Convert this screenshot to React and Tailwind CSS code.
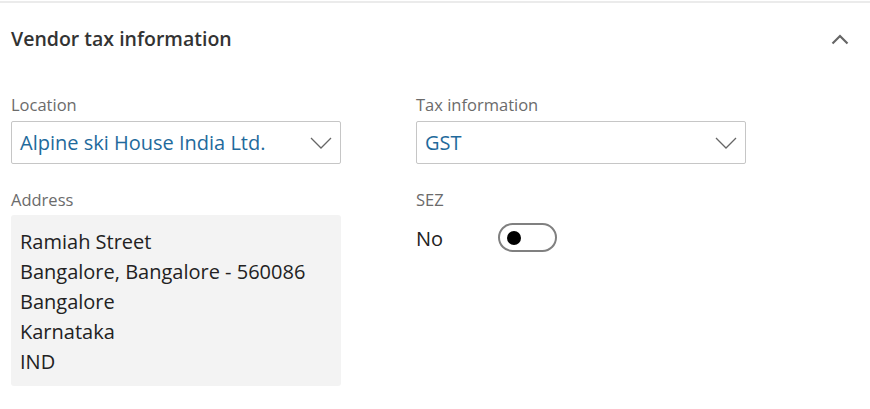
function ChevronDown() {
  return (
    <svg width="22" height="12" viewBox="0 0 22 12" fill="none" className="shrink-0">
      <path d="M1 1 L11 11 L21 1" stroke="#666666" strokeWidth="1.3" />
    </svg>
  );
}

function ChevronUp() {
  return (
    <svg width="18" height="11" viewBox="0 0 18 11" fill="none">
      <path d="M1.5 9.5 L9 2 L16.5 9.5" stroke="#666666" strokeWidth="2.2" />
    </svg>
  );
}

function Label({ children }) {
  return <p className="text-[16.5px] leading-5 text-[#6b6b6b]">{children}</p>;
}

function Select({ value }) {
  return (
    <div className="mt-[6px] flex h-[43px] w-[330px] items-center justify-between rounded-[2px] border border-[#c6c6c6] pl-[8px] pr-[8px]">
      <span className="text-[20px] text-[#1f6a9c]">{value}</span>
      <ChevronDown />
    </div>
  );
}

export default function App() {
  const address = ["Ramiah Street", "Bangalore, Bangalore - 560086", "Bangalore", "Karnataka", "IND"];

  return (
    <div
      className="h-[409px] w-[870px] bg-white"
      style={{ fontFamily: '"Segoe UI", "Open Sans", "Noto Sans", sans-serif' }}
    >
      <div className="mt-px h-[2px] w-full bg-[#ebebeb]" />

      <div className="flex h-[72px] items-center justify-between pl-[11px] pr-[21px]">
        <h2 className="text-[19.5px] font-semibold text-[#333333]">Vendor tax information</h2>
        <ChevronUp />
      </div>

      <div className="flex gap-[75px] pl-[11px] pt-[20px]">
        <div className="w-[330px]">
          <Label>Location</Label>
          <Select value="Alpine ski House India Ltd." />

          <div className="mt-[26px]">
            <Label>Address</Label>
            <div className="mt-[5px] h-[171px] rounded-[3px] bg-[#f3f3f3] px-[9px] pt-[12px] text-[20px] leading-[30px] text-[#222222]">
              {address.map((line) => (
                <p key={line}>{line}</p>
              ))}
            </div>
          </div>
        </div>

        <div className="w-[330px]">
          <Label>Tax information</Label>
          <Select value="GST" />

          <div className="mt-[26px]">
            <Label>SEZ</Label>
            <div className="mt-[13px] flex h-[29px] items-center">
              <span className="w-[82px] pt-[3px] text-[20px] text-[#222222]">No</span>
              <div className="flex h-[29px] w-[59px] items-center rounded-full border-2 border-[#808080] pl-[7px]">
                <div className="h-[14px] w-[14px] rounded-full bg-black" />
              </div>
            </div>
          </div>
        </div>
      </div>
    </div>
  );
}
